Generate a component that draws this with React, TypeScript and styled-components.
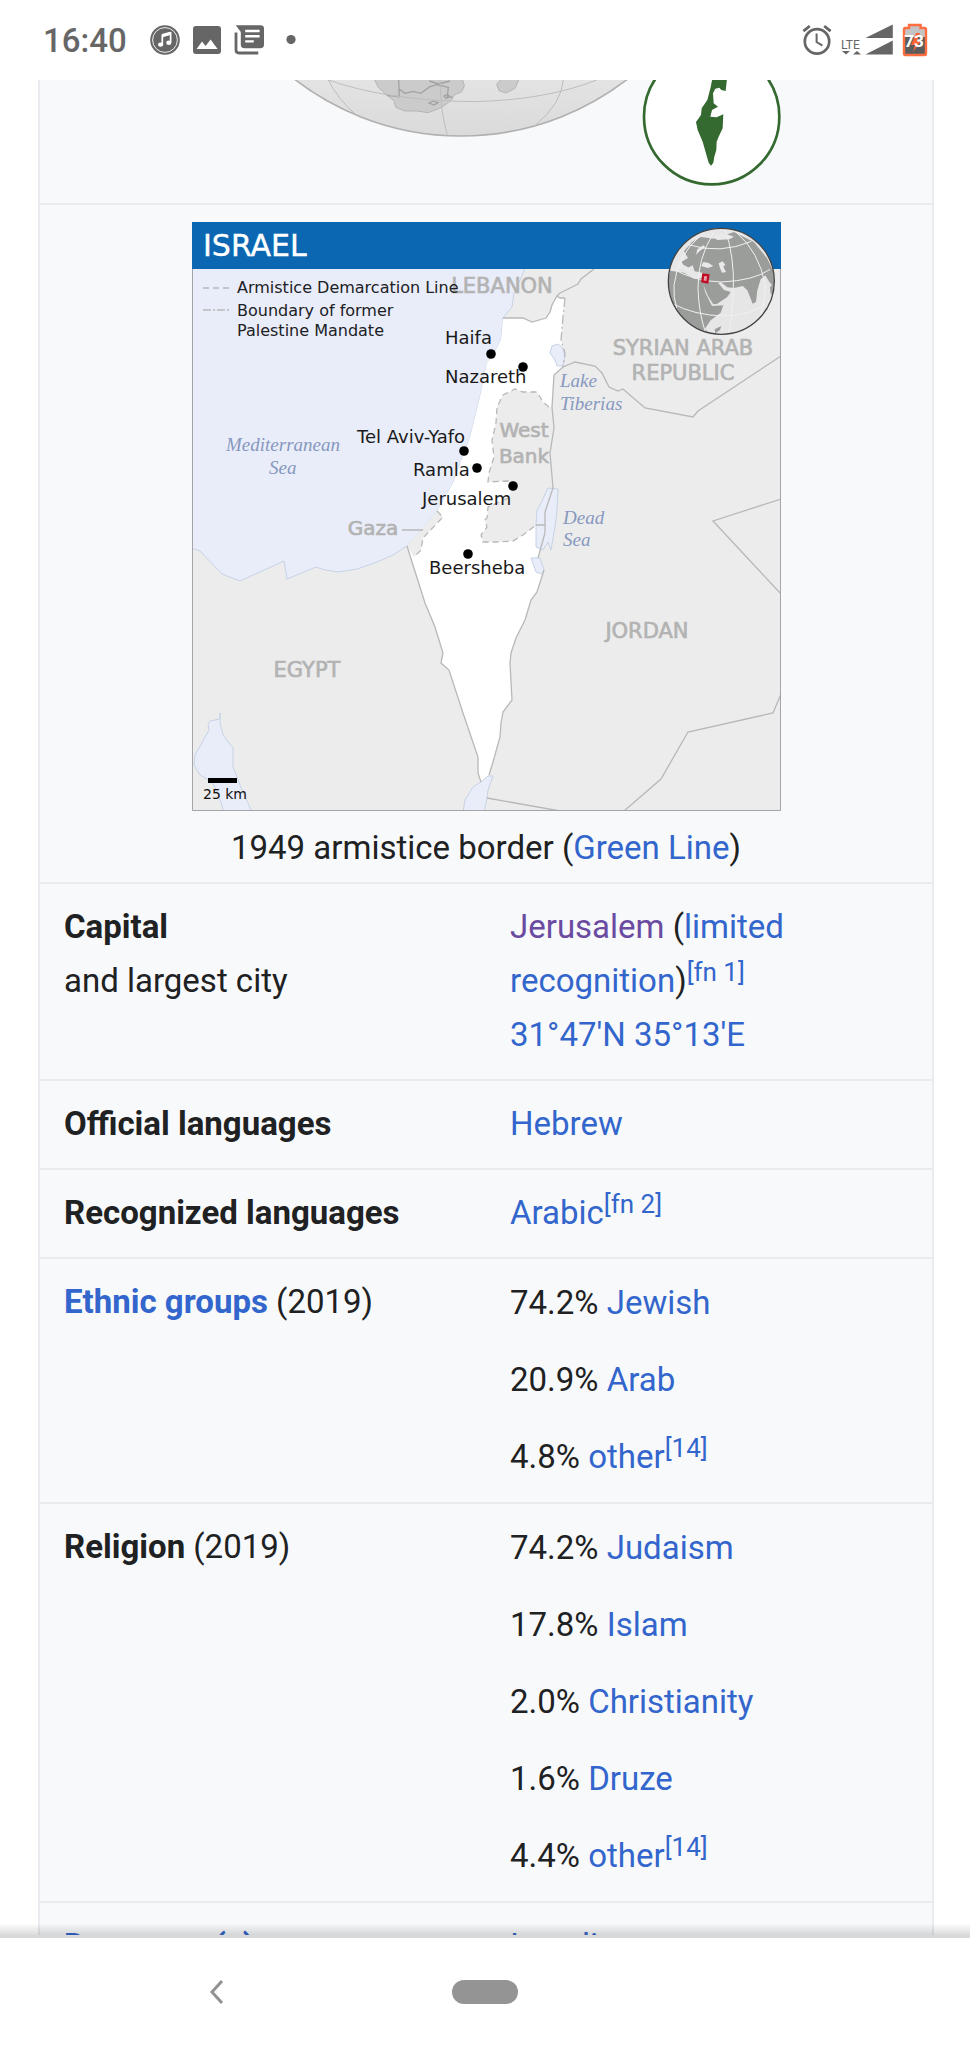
import React from "react";
import styled, { createGlobalStyle } from "styled-components";

const GlobalStyle = createGlobalStyle`
  * { box-sizing: border-box; }
  body {
    margin: 0;
    background: #fff;
    color: #202122;
    font-family: Roboto, "Liberation Sans", sans-serif;
    font-size: 33px;
    line-height: 54px;
  }
`;

const Screen = styled.div`
  display: flex;
  flex-direction: column;
  height: 100vh;
`;

const StatusBar = styled.header`
  display: flex;
  flex: none;
  align-items: center;
  justify-content: space-between;
  height: 80px;
  padding: 0 42px 0 43px;
  color: #666;
`;

const StatusGroup = styled.div<{ $gap: number }>`
  display: flex;
  align-items: center;
  gap: ${(p) => p.$gap}px;
`;

const Clock = styled.time`
  padding-top: 2px;
  margin-right: 12px;
  font-weight: 500;
`;

const Icon = styled.svg`
  display: block;
  flex: none;
`;

const Page = styled.main`
  position: relative;
  flex: 1;
  min-height: 0;
  overflow: hidden;

  &::after {
    content: "";
    position: absolute;
    inset: auto 0 0 0;
    height: 12px;
    background: linear-gradient(rgba(0, 0, 0, 0), rgba(0, 0, 0, 0.14));
  }
`;

const Panel = styled.div`
  margin: 0 36px 0 38px;
  border: solid #e9ebee;
  border-width: 0 2px;
  background: #f8f9fb;
`;

const Infobox = styled.table`
  width: 100%;
  table-layout: fixed;
  border-collapse: separate;
  border-spacing: 0;

  th,
  td {
    padding: 16px 24px 17px;
    border-top: 2px solid #e9ebee;
    text-align: left;
    vertical-align: top;
    font-weight: 400;
  }
`;

const Infobody = styled.tbody`
  tr:first-child > td {
    padding: 0 0 16px;
    border-top: 0;
  }
`;

const MapCell = styled.td`
  && {
    padding: 17px 0 7px;
    text-align: center;
  }
`;

const Drawing = styled.svg`
  display: block;
  margin: 0 auto;
`;

const Figure = styled.figure`
  margin: 0;
`;

const Caption = styled.figcaption`
  margin-top: 10px;
`;

const Link = styled.a<{ $visited?: boolean }>`
  color: ${(p) => (p.$visited ? "#6b4ba1" : "#3366cc")};
  text-decoration: none;
`;

const Note = styled.sup`
  font-size: 26px;
  line-height: 0;
  vertical-align: 11px;
`;

const Shares = styled.ul`
  display: flex;
  flex-direction: column;
  gap: 23px;
  margin: 0;
  padding: 1px 0;
  list-style: none;
`;

const NavBar = styled.nav`
  display: grid;
  flex: none;
  grid-template-columns: 1fr 66px 1fr;
  gap: 19px;
  align-items: center;
  justify-items: center;
  height: 113px;
  padding-bottom: 2px;
  border-top: 3px solid #d6d8da;
`;

const BackButton = styled.button`
  display: grid;
  place-items: center;
  width: 48px;
  height: 48px;
  padding: 0;
  border: 0;
  background: none;
`;

const HomeButton = styled.button`
  width: 66px;
  height: 24px;
  padding: 0;
  border: 0;
  border-radius: 12px;
  background: #949494;
`;

const MusicIcon = () => (
  <Icon width="32" height="32" viewBox="0 0 32 32">
    <circle cx="16" cy="16" r="14.8" fill="#666" />
    <circle cx="16" cy="16" r="12.4" fill="none" stroke="#fff" strokeWidth="0.9" />
    <path d="M13.3 11.4 L21.6 9 V18.6" fill="none" stroke="#fff" strokeWidth="1.7" />
    <path d="M13.3 11.6 L21.6 9.2" stroke="#fff" strokeWidth="3.2" />
    <path d="M13.3 10.6 V20.4" stroke="#fff" strokeWidth="1.7" />
    <ellipse cx="11.6" cy="20.6" rx="2.6" ry="2.2" fill="#fff" />
    <ellipse cx="19.8" cy="18.8" rx="2.6" ry="2.2" fill="#fff" />
  </Icon>
);

const ImageIcon = () => (
  <Icon width="32" height="32" viewBox="0 0 32 32">
    <rect x="2" y="2" width="28" height="28" rx="3" fill="#666" />
    <path d="M5.6 25 L11 17.6 L14.6 22 L19.6 15.6 L26.6 25 Z" fill="#fff" />
  </Icon>
);

const NewsIcon = () => (
  <Icon width="32" height="32" viewBox="0 0 32 32">
    <path d="M2.8 1.2 H27.4 Q31 1.2 31 4.6 V20.8 Q31 24.2 27.4 24.2 H11.4 Q7.8 24.2 7.8 20.8 V8 Z" fill="#666" />
    <path d="M12.2 7 H26.6 M12.2 12.2 H26.6 M12.2 17.4 H20.8" stroke="#fff" strokeWidth="2.4" />
    <path d="M3 8.4 V26 Q3 29 6 29 H25.2" fill="none" stroke="#666" strokeWidth="2.8" />
  </Icon>
);

const DotIcon = () => (
  <Icon width="32" height="32" viewBox="0 0 32 32">
    <circle cx="16" cy="15.6" r="4.6" fill="#666" />
  </Icon>
);

const AlarmIcon = () => (
  <Icon width="32" height="32" viewBox="0 0 32 32" fill="none" stroke="#666">
    <circle cx="16" cy="17.4" r="12.2" strokeWidth="2.7" />
    <path d="M15.6 9.6 V18 L21.4 21.6" strokeWidth="2" />
    <path d="M2.4 7.2 L8.8 2 M29.6 7.2 L23.2 2" strokeWidth="2.8" />
  </Icon>
);

const SignalIcon = () => (
  <Icon width="53" height="32" viewBox="0 0 53 32" fill="#666">
    <text x="0" y="25" fontSize="12" fontFamily="Roboto, sans-serif">
      LTE
    </text>
    <path d="M1 27 H9 L5 30.6 Z M12 30.6 H20 L16 27 Z" />
    <path d="M24.4 14 L51.8 0.4 V14 Z M24.4 30.6 L51.8 16.6 V30.6 Z" />
  </Icon>
);

const BatteryIcon = () => (
  <Icon width="26" height="34" viewBox="0 0 26 34">
    <path
      d="M2 6.4 Q2 5 3.4 5 H7 V2 H18.6 V5 H22.4 Q24 5 24 6.4 V30.6 Q24 32 22.4 32 H3.4 Q2 32 2 30.6 Z"
      fill="#c4c4c4"
    />
    <path d="M2 14 H24 V31 H2 Z" fill="#5c5c5c" />
    <path d="M14 10 L9 22 H13 L11 29 L19 18 H15 L18 10 Z" fill="#ff6433" />
    <path
      d="M2 6.4 Q2 5 3.4 5 H7 V2 H18.6 V5 H22.4 Q24 5 24 6.4 V30.6 Q24 32 22.4 32 H3.4 Q2 32 2 30.6 Z"
      fill="none"
      stroke="#ff6e40"
      strokeWidth="2.4"
    />
    <text x="12" y="24" textAnchor="middle" fontSize="17" fontWeight="700" fontFamily="Roboto, sans-serif" fill="#fff">
      73
    </text>
  </Icon>
);

const GlobeDrawing = () => (
  <Drawing width="589" height="107" viewBox="0 0 589 107" role="img" aria-label="Location on the globe">
    <defs>
      <linearGradient id="ocean" x1="0" y1="0.8" x2="0" y2="1">
        <stop offset="0" stopColor="#ececec" />
        <stop offset="1" stopColor="#dadada" />
      </linearGradient>
    </defs>
    <g transform="translate(-192 -80) scale(0.33333)">
      <circle cx="1383" cy="-408" r="816" fill="url(#ocean)" stroke="#b0b0b0" strokeWidth="5" />
      <path
        d="M1122 236 L1135 262 L1160 285 L1182 302 L1187 322 L1215 333 L1250 333 L1285 338 L1325 322 L1355 300 L1362 285 L1385 275 L1393 258 L1387 236 Z M1490 252 L1505 236 H1558 L1545 265 L1518 279 L1497 272 Z"
        fill="#cbcbcb"
        stroke="#b4b4b4"
        strokeWidth="3"
      />
      <path
        d="M1196 240 L1198 290 L1160 286 M1196 266 L1215 280 L1240 274 L1262 280 L1290 260 L1310 254 L1345 262 L1342 290 L1358 292 M1288 243 L1315 252 L1350 243 M1287 309 L1300 303 L1314 308 L1302 315 Z M1332 288 L1342 282 L1350 290 L1338 295 Z"
        fill="none"
        stroke="#a2a2a2"
        strokeWidth="4"
      />
      <path
        d="M985 240 Q1160 302 1420 305 Q1640 300 1790 240 M985 240 Q1015 300 1070 346 M1320 240 Q1322 340 1342 404 M1690 240 Q1685 310 1606 376"
        fill="none"
        stroke="#bdbdbd"
        strokeWidth="3"
      />
      <circle cx="2135" cy="350" r="203" fill="#fff" stroke="#34692f" strokeWidth="8" />
      <path
        d="M2137 236 H2181 L2177 273 L2164 270 L2158 263 L2146 266 L2139 280 L2141 310 L2154 320 L2136 330 L2131 350 L2150 352 L2170 343 L2168 385 L2156 410 L2150 425 L2149 450 L2143 470 L2140 488 L2133 497 L2126 488 L2108 425 L2093 390 L2088 366 L2103 345 L2105 325 L2122 300 L2132 262 Z"
        fill="#34692f"
      />
    </g>
  </Drawing>
);

const places = [
  { name: "Haifa", x: 253, y: 122, cx: 299, cy: 132 },
  { name: "Nazareth", x: 253, y: 161, cx: 331, cy: 145 },
  { name: "Tel Aviv-Yafo", x: 165, y: 221, cx: 272, cy: 229 },
  { name: "Ramla", x: 221, y: 254, cx: 285, cy: 246 },
  { name: "Jerusalem", x: 230, y: 283, cx: 321, cy: 264 },
  { name: "Beersheba", x: 237, y: 352, cx: 276, cy: 332 },
];

const regions = [
  { name: "LEBANON", x: 310, y: 71, size: 21 },
  { name: "SYRIAN ARAB", x: 491, y: 133, size: 21 },
  { name: "REPUBLIC", x: 491, y: 158, size: 21 },
  { name: "West", x: 332, y: 215, size: 20 },
  { name: "Bank", x: 332, y: 241, size: 20 },
  { name: "JORDAN", x: 455, y: 416, size: 21 },
  { name: "EGYPT", x: 115, y: 455, size: 21 },
  { name: "Gaza", x: 181, y: 313, size: 20 },
];

const waters = [
  { name: "Mediterranean", x: 34, y: 229 },
  { name: "Sea", x: 77, y: 252 },
  { name: "Lake", x: 368, y: 165 },
  { name: "Tiberias", x: 368, y: 188 },
  { name: "Dead", x: 371, y: 302 },
  { name: "Sea", x: 371, y: 324 },
];

const MapDrawing = () => (
  <Drawing width="589" height="589" viewBox="0 0 589 589" role="img" aria-label="Map of Israel">
    <rect width="589" height="589" fill="#ececec" />
    <g fill="#e9edf9" stroke="#c6d3e6" strokeWidth="1">
      <path d="M-1 46 H333 L329 56 L322 71 L320 85 L311 96 L309 118 L300 135 L295 140 L288 175 L278 215 L261 261 L245 289 L231 306 L215 324 L201 333 L185 340 L165 347 L146 350 L133 348 L124 345 L95 357 L92 339 L48 359 L30 352 L8 329 L-1 326 Z" />
      <path d="M28 491 V497 L18 499 L16 503 L17 508 L3 533 L2 543 L8 553 L20 560 L26 571 L32 590 H60 L50 568 L41 545 L41 526 L31 513 L28 501 Z" />
    </g>
    <path
      d="M311 96 L331 96 L340 100 L354 96 L358 90 L360 83 L365 74 L368 76 L373 76 L371 95 L369 118 L373 131 L371 145 L362 153 L360 185 L362 206 L358 231 L361 266 L353 290 L353 311 L346 336 L351 350 L345 370 L339 378 L333 398 L324 416 L319 431 L318 441 L320 478 L311 490 L309 501 L308 515 L301 540 L297 553 L289 560 L286 551 L286 535 L271 491 L257 448 L249 441 L251 431 L243 405 L233 381 L215 324 L231 306 L245 289 L261 261 L278 215 L288 175 L295 140 L300 135 L309 118 Z"
      fill="#fff"
    />
    <path d="M245 289 L251 295 L231 316 L229 328 L222 335 L215 324 L231 306 Z" fill="#ececec" />
    <path
      d="M360 185 L357 185 L351 180 L345 170 L331 170 L323 167 L311 173 L305 185 L304 201 L300 218 L302 235 L297 251 L296 260 L316 259 L321 264 L316 276 L296 285 L295 296 L293 298 L295 305 L289 313 L291 320 L305 320 L321 319 L331 313 L345 303 L361 266 L358 231 L362 206 Z"
      fill="#ececec"
    />
    <g fill="#e9edf9" stroke="#c6d3e6" strokeWidth="1">
      <path d="M360 124 L366 122 L370 125 L373 133 L371 144 L365 144 L363 138 L358 131 Z" />
      <path d="M356 266 L366 267 L365 288 L363 305 L359 328 L356 320 L351 328 L344 325 L344 303 L345 288 L350 279 Z" />
      <path d="M339 336 L348 336 L352 348 L350 352 L344 350 Z" />
      <path d="M289 560 L296 554 L301 554 L296 568 L295 576 L292 590 H271 L273 578 L281 565 Z" />
    </g>
    <g fill="none" stroke="#b8b8b8" strokeWidth="1.3">
      <path d="M311 96 L331 96 L340 100 L354 96 L358 90 L360 83 L365 74 L368 76 L373 76" />
      <path d="M368 71 L386 62 L389 57 L402 47 M365 74 L368 71" />
      <path d="M373 76 L371 95 L369 118 L373 131 L371 145" strokeDasharray="9 3 2 3" />
      <path d="M371 145 L383 140 L403 144 L410 151 L417 165 L426 169 L431 167 L453 186 L501 195 L506 189 L589 134" />
      <path d="M371 145 L362 153 L360 185 L362 206 L358 231 L361 266 L353 290 L353 311 L346 336 M352 348 L345 370 L339 378 L333 398 L324 416 L319 431 L318 441 L320 478 L311 490 L309 501 L308 515 L301 540 L297 553" />
      <path d="M215 324 L233 381 L243 405 L251 431 L249 441 L257 448 L271 491 L286 535 L286 551 L289 560" />
      <path d="M295 576 L368 589 M432 589 L469 557 L496 510 L581 491 L589 472 M589 372 L521 299 L589 277" />
      <path d="M210 308 H231 M344 303 H353" />
      <path
        d="M357 185 L351 180 L345 170 L331 170 L323 167 L311 173 L305 185 L304 201 L300 218 L302 235 L297 251 L296 260 L316 259 L321 264 M316 276 L296 285 L295 296 L293 298 L295 305 L289 313 L291 320 L305 320 L321 319 L331 313 L344 303 M245 289 L251 295 L231 316 L229 328 L222 335"
        strokeDasharray="6 4"
      />
      <path d="M11 66 H37" strokeDasharray="6 4" />
      <path d="M11 88 H37" strokeDasharray="8 2 2 2" />
    </g>
    <rect width="589" height="47" fill="#0b67b2" />
    <path d="M0.5 47 V588.5 H588.5 V47" fill="none" stroke="#a3a5a8" />

    <g transform="translate(472 0) scale(0.33333)">
      <clipPath id="disc">
        <circle cx="172" cy="178" r="158" />
      </clipPath>
      <circle cx="172" cy="178" r="159" fill="#e6e6e6" />
      <g clipPath="url(#disc)">
        <path
          d="M60 88 L84 60 L110 45 L150 50 L210 30 L270 60 L310 110 L334 160 L330 196 L316 180 L304 160 L290 172 L280 205 L276 240 L266 245 L250 205 L236 192 L210 198 L190 196 L170 180 L163 184 L180 204 L200 210 L190 225 L160 245 L148 247 L132 222 L118 188 L124 212 L144 252 L178 250 L170 272 L140 295 L122 322 L150 342 L60 310 L28 262 L8 200 L18 146 L60 152 L90 170 L114 168 L116 152 L92 148 L86 130 L66 140 L46 124 L72 108 Z"
          fill="#9b9d9b"
        />
        <path
          d="M36 120 L48 112 L58 128 L80 140 L84 152 L70 150 L56 138 L40 140 Z M112 132 L118 120 L132 122 L148 132 L132 138 Z M164 124 L176 118 L184 128 L178 134 L186 150 L174 152 L168 138 Z M118 70 L100 82 L96 98 L108 86 L124 76 Z M146 44 L180 34 L210 44 L196 52 L160 54 Z"
          fill="#e9e9e9"
        />
        <path d="M152 322 L172 312 L168 324 L154 334 Z M318 196 L326 186 L328 214 L320 216 Z" fill="#9b9d9b" />
        <path
          d="M22 138 Q90 178 172 180 Q270 176 318 142 M72 68 Q170 98 262 58 M24 244 Q90 280 180 282 Q270 280 318 236 M150 30 Q100 110 102 200 Q104 270 124 330 M184 22 Q212 110 208 200 Q206 280 194 336 M216 30 Q286 90 304 190 Q304 230 290 276 M110 40 Q40 100 30 190 Q28 230 38 258"
          fill="none"
          stroke="#f0f0f0"
          strokeWidth="3"
        />
      </g>
      <circle cx="172" cy="178" r="159" fill="none" stroke="#444" strokeWidth="4" />
      <path d="M118 158 L133 160 L130 181 L115 178 Z" fill="#e8a0a8" stroke="#c00d24" strokeWidth="7" />
    </g>

    <g fontFamily='"DejaVu Sans", sans-serif'>
      <text x="11" y="34" fontSize="30" fill="#fff" stroke="#fff" strokeWidth="0.4">ISRAEL</text>
      <g fill="#b3b3b3" stroke="#b3b3b3" strokeWidth="0.7" textAnchor="middle">
        {regions.map((r) => (
          <text key={r.name} x={r.x} y={r.y} fontSize={r.size}>{r.name}</text>
        ))}
      </g>
      <g fontSize="16" fill="#202124">
        <text x="45" y="71">Armistice Demarcation Line</text>
        <text x="45" y="94">Boundary of former</text>
        <text x="45" y="114">Palestine Mandate</text>
      </g>
      <text x="11" y="577" fontSize="14" fill="#111">25 km</text>
      <g fontSize="18" fill="#1a1a1a">
        {places.map((p) => (
          <text key={p.name} x={p.x} y={p.y}>{p.name}</text>
        ))}
      </g>
    </g>
    {places.map((p) => (
      <circle key={p.name} cx={p.cx} cy={p.cy} r="4.8" fill="#000" />
    ))}
    <g fontFamily='"Liberation Serif", serif' fontStyle="italic" fontSize="19" fill="#8798c0">
      {waters.map((w) => (
        <text key={w.name + w.x} x={w.x} y={w.y}>{w.name}</text>
      ))}
    </g>
    <rect x="16" y="556" width="29" height="5" fill="#000" />
  </Drawing>
);

type Share = { value: string; name: string; note?: string };

const ShareList = ({ items }: { items: Share[] }) => (
  <Shares>
    {items.map((s) => (
      <li key={s.name}>
        {s.value} <Link href="#">{s.name}</Link>
        {s.note && <Note><Link href="#">{s.note}</Link></Note>}
      </li>
    ))}
  </Shares>
);

const ethnicGroups: Share[] = [
  { value: "74.2%", name: "Jewish" },
  { value: "20.9%", name: "Arab" },
  { value: "4.8%", name: "other", note: "[14]" },
];

const religions: Share[] = [
  { value: "74.2%", name: "Judaism" },
  { value: "17.8%", name: "Islam" },
  { value: "2.0%", name: "Christianity" },
  { value: "1.6%", name: "Druze" },
  { value: "4.4%", name: "other", note: "[14]" },
];

export default function App() {
  return (
    <Screen>
      <GlobalStyle />
      <StatusBar>
        <StatusGroup $gap={10}>
          <Clock>16:40</Clock>
          <MusicIcon />
          <ImageIcon />
          <NewsIcon />
          <DotIcon />
        </StatusGroup>
        <StatusGroup $gap={8}>
          <AlarmIcon />
          <SignalIcon />
          <BatteryIcon />
        </StatusGroup>
      </StatusBar>
      <Page>
        <Panel>
          <Infobox>
            <Infobody>
              <tr>
                <td colSpan={2}><GlobeDrawing /></td>
              </tr>
              <tr>
                <MapCell colSpan={2}>
                  <Figure>
                    <MapDrawing />
                    <Caption>
                      1949 armistice border (<Link href="#">Green Line</Link>)
                    </Caption>
                  </Figure>
                </MapCell>
              </tr>
              <tr>
                <th scope="row"><b>Capital</b><br />and largest city</th>
                <td>
                  <Link href="#" $visited>Jerusalem</Link> (<Link href="#">limited<br />recognition</Link>)
                  <Note><Link href="#">[fn 1]</Link></Note>
                  <br />
                  <Link href="#">31°47'N 35°13'E</Link>
                </td>
              </tr>
              <tr>
                <th scope="row"><b>Official languages</b></th>
                <td><Link href="#">Hebrew</Link></td>
              </tr>
              <tr>
                <th scope="row"><b>Recognized languages</b></th>
                <td><Link href="#">Arabic</Link><Note><Link href="#">[fn 2]</Link></Note></td>
              </tr>
              <tr>
                <th scope="row"><Link href="#"><b>Ethnic groups</b></Link> (2019)</th>
                <td><ShareList items={ethnicGroups} /></td>
              </tr>
              <tr>
                <th scope="row"><b>Religion</b> (2019)</th>
                <td><ShareList items={religions} /></td>
              </tr>
              <tr>
                <th scope="row"><Link href="#"><b>Demonym(s)</b></Link></th>
                <td><Link href="#">Israeli</Link></td>
              </tr>
            </Infobody>
          </Infobox>
        </Panel>
      </Page>
      <NavBar>
        <BackButton aria-label="Back">
          <Icon width="16" height="26" viewBox="0 0 16 26">
            <path d="M13 2 L3 13 L13 24" fill="none" stroke="#929292" strokeWidth="3" />
          </Icon>
        </BackButton>
        <HomeButton aria-label="Home" />
      </NavBar>
    </Screen>
  );
}
